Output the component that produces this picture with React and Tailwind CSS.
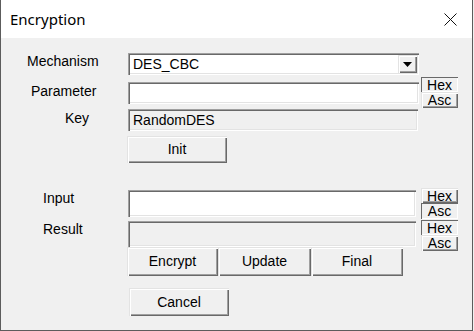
import React from "react";

const sunken =
  "bg-white shadow-[inset_1px_1px_0_#a0a0a0,inset_2px_2px_0_#696969,inset_-1px_-1px_0_#ffffff,inset_-2px_-2px_0_#e3e3e3]";
const sunkenGray =
  "bg-[#f0f0f0] shadow-[inset_1px_1px_0_#a0a0a0,inset_2px_2px_0_#696969,inset_-1px_-1px_0_#ffffff,inset_-2px_-2px_0_#e3e3e3]";
const raised =
  "bg-[#f0f0f0] shadow-[inset_1px_1px_0_#e3e3e3,inset_2px_2px_0_#ffffff,inset_-1px_-1px_0_#696969,inset_-2px_-2px_0_#a0a0a0]";
const pressed =
  "bg-[#f0f0f0] shadow-[inset_1px_1px_0_#696969,inset_-1px_-1px_0_#ffffff]";

const Btn = ({ text, classes = "" }) => (
  <div className={`${raised} flex items-center justify-center ${classes}`}>{text}</div>
);

const HexAsc = ({ hexDown, classes = "" }) => (
  <div className={`flex flex-col w-[37px] text-[14px] leading-none ${classes}`}>
    <div className={`${hexDown ? pressed : raised} h-[15px] flex items-center justify-center`}>Hex</div>
    <div className={`${hexDown ? raised : pressed} h-[16px] flex items-center justify-center`}>Asc</div>
  </div>
);

const App = () => {
  return (
    <div
      className="w-[474px] h-[331px] bg-[#f0f0f0] text-black overflow-hidden"
      style={{ fontFamily: '"Liberation Sans", Arial, sans-serif' }}
    >
      <div className="w-[473px] h-[331px] flex flex-col border-l border-r border-b border-[#5c5c5c]">
        {/* title bar */}
        <div className="h-[38px] bg-white flex items-center justify-between pl-[9px] pr-[14px]">
          <span
            className="text-[15px] text-black"
            style={{ fontFamily: '"Noto Sans", "Open Sans", sans-serif' }}
          >
            Encryption
          </span>
          <svg width="13" height="13" viewBox="0 0 13 13" className="mr-[1px]">
            <path d="M0.5 0.5 L12.5 12.5 M12.5 0.5 L0.5 12.5" stroke="#111" strokeWidth="1" />
          </svg>
        </div>

        <div className="flex-1 flex flex-col text-[14px] pt-[15px]">
          {/* Mechanism */}
          <div className="flex h-[22px] items-center">
            <div className="w-[127px] pl-[26px] -mt-[5px]">Mechanism</div>
            <div className={`${sunken} w-[291px] h-[22px] flex items-center justify-between pl-[5px] pr-[2px]`}>
              <span>DES_CBC</span>
              <div className={`${raised} w-[19px] h-[18px] flex items-center justify-center`}>
                <svg width="9" height="5" viewBox="0 0 9 5">
                  <path d="M0 0 L9 0 L4.5 5 Z" fill="#000" />
                </svg>
              </div>
            </div>
          </div>

          {/* Parameter */}
          <div className="flex h-[22px] items-center mt-[7px]">
            <div className="w-[127px] pl-[30px] -mt-[3px]">Parameter</div>
            <div className={`${sunken} w-[291px] h-[22px]`} />
            <HexAsc hexDown classes="ml-[2px] -mt-[1px]" />
          </div>

          {/* Key */}
          <div className="flex h-[22px] items-center mt-[5px]">
            <div className="w-[127px] pl-[64px] -mt-[3px]">Key</div>
            <div className={`${sunkenGray} w-[290px] h-[22px] flex items-center pl-[5px]`}>RandomDES</div>
          </div>

          <Btn text="Init" classes="w-[100px] h-[27px] ml-[126px] mt-[5px]" />

          {/* Input */}
          <div className="flex h-[27px] items-center mt-[27px]">
            <div className="w-[127px] pl-[42px] -mt-[10px]">Input</div>
            <div className={`${sunken} w-[288px] h-[27px]`} />
            <HexAsc classes="ml-[5px]" />
          </div>

          {/* Result */}
          <div className="flex h-[26px] items-center mt-[4px]">
            <div className="w-[127px] pl-[42px] -mt-[10px]">Result</div>
            <div className={`${sunkenGray} w-[288px] h-[26px]`} />
            <HexAsc hexDown classes="ml-[5px] mt-[3px]" />
          </div>

          <div className="flex ml-[126px] h-[29px]">
            <Btn text="Encrypt" classes="w-[91px] h-[29px]" />
            <Btn text="Update" classes="w-[93px] h-[29px]" />
            <Btn text="Final" classes="w-[92px] h-[29px]" />
          </div>

          <Btn text="Cancel" classes="w-[100px] h-[28px] ml-[128px] mt-[12px]" />
        </div>
      </div>
    </div>
  );
};

export default App;
